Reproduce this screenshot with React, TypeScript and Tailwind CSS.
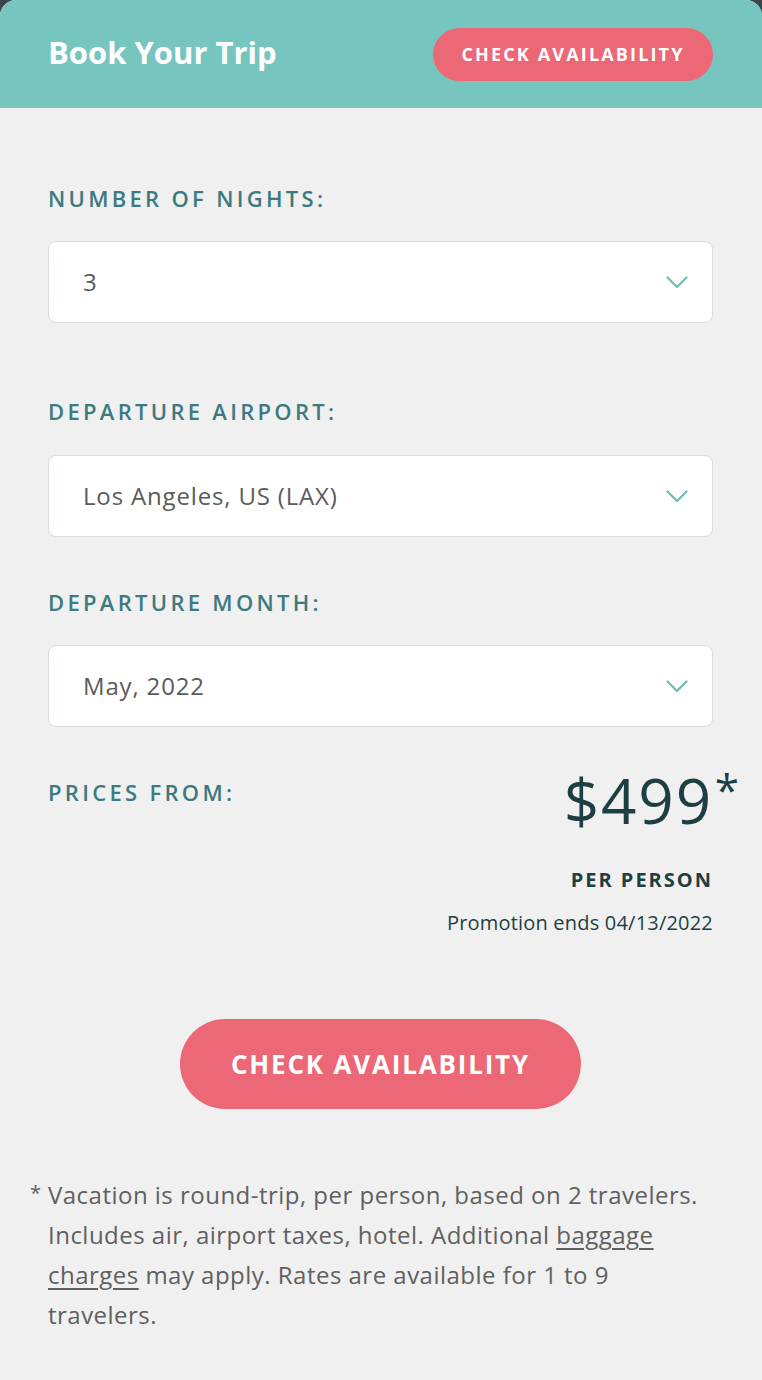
const font = { fontFamily: '"Open Sans", Lato, sans-serif' };

function Chevron() {
  return (
    <svg width="22" height="13" viewBox="0 0 22 13" fill="none" className="text-[#6dbcb6]">
      <path d="M1.5 1.5 L11 11 L20.5 1.5" stroke="currentColor" strokeWidth="2.2" strokeLinecap="round" strokeLinejoin="round" />
    </svg>
  );
}

function Select({ value }: { value: string }) {
  return (
    <div className="h-[82px] bg-white border border-[#d6dddd] rounded-lg flex items-center justify-between pl-[34px] pr-[24px]">
      <span className="text-[24px] tracking-[0.035em] text-[#5b5b5b]">{value}</span>
      <Chevron />
    </div>
  );
}

function Label({ children }: { children: string }) {
  return (
    <div className="text-[22px] font-semibold tracking-[0.15em] text-[#3d7a80] leading-none">{children}</div>
  );
}

export default function App() {
  return (
    <div className="w-[762px] h-[1380px] bg-[#3b4446]" style={font}>
      <div className="h-full bg-[#f0f0f0] rounded-t-2xl overflow-hidden">
        <header className="h-[108px] bg-[#76c6bf] flex items-center justify-between pl-[48px] pr-[49px]">
          <h1 className="text-[31px] font-bold text-white -mt-[4px]">Book Your Trip</h1>
          <button className="h-[53px] w-[280px] rounded-full bg-[#ec6877] text-white text-[18px] font-bold tracking-[0.12em]">
            CHECK AVAILABILITY
          </button>
        </header>

        <div className="px-[48px] pr-[49px]">
          <div className="pt-[79px]">
            <Label>NUMBER OF NIGHTS:</Label>
          </div>
          <div className="mt-[32px]">
            <Select value="3" />
          </div>

          <div className="mt-[77px]">
            <Label>DEPARTURE AIRPORT:</Label>
          </div>
          <div className="mt-[33px]">
            <Select value="Los Angeles, US (LAX)" />
          </div>

          <div className="mt-[54px]">
            <Label>DEPARTURE MONTH:</Label>
          </div>
          <div className="mt-[32px]">
            <Select value="May, 2022" />
          </div>

          <div className="mt-[54px] flex justify-between items-start">
            <Label>PRICES FROM:</Label>
            <div className="flex flex-col items-end">
              <div className="relative -mt-[12px] text-[62px] leading-none text-[#1e3f42] tracking-[0.03em]">
                $499<span className="absolute -right-[26px] -top-[2px] text-[44px] tracking-normal">*</span>
              </div>
              <div className="mt-[39px] text-[20px] font-bold tracking-[0.1em] text-[#1e3f42] leading-none">PER PERSON</div>
              <div className="mt-[23px] text-[20px] tracking-[0.01em] text-[#1e3f42] leading-none">Promotion ends 04/13/2022</div>
            </div>
          </div>

          <div className="mt-[86px] flex justify-center">
            <button className="h-[90px] w-[401px] rounded-full bg-[#ec6877] text-white text-[26px] font-bold tracking-[0.07em]">
              CHECK AVAILABILITY
            </button>
          </div>

          <div className="mt-[66px] relative text-[24px] leading-[40px] text-[#606060] tracking-[0.02em]">
            <span className="absolute -left-[18px] top-[-2px] text-[20px]">*</span>
            Vacation is round-trip, per person, based on 2 travelers. Includes air, airport taxes, hotel. Additional{' '}
            <span className="underline underline-offset-4">baggage charges</span> may apply. Rates are available for 1 to 9 travelers.
          </div>
        </div>
      </div>
    </div>
  );
}
